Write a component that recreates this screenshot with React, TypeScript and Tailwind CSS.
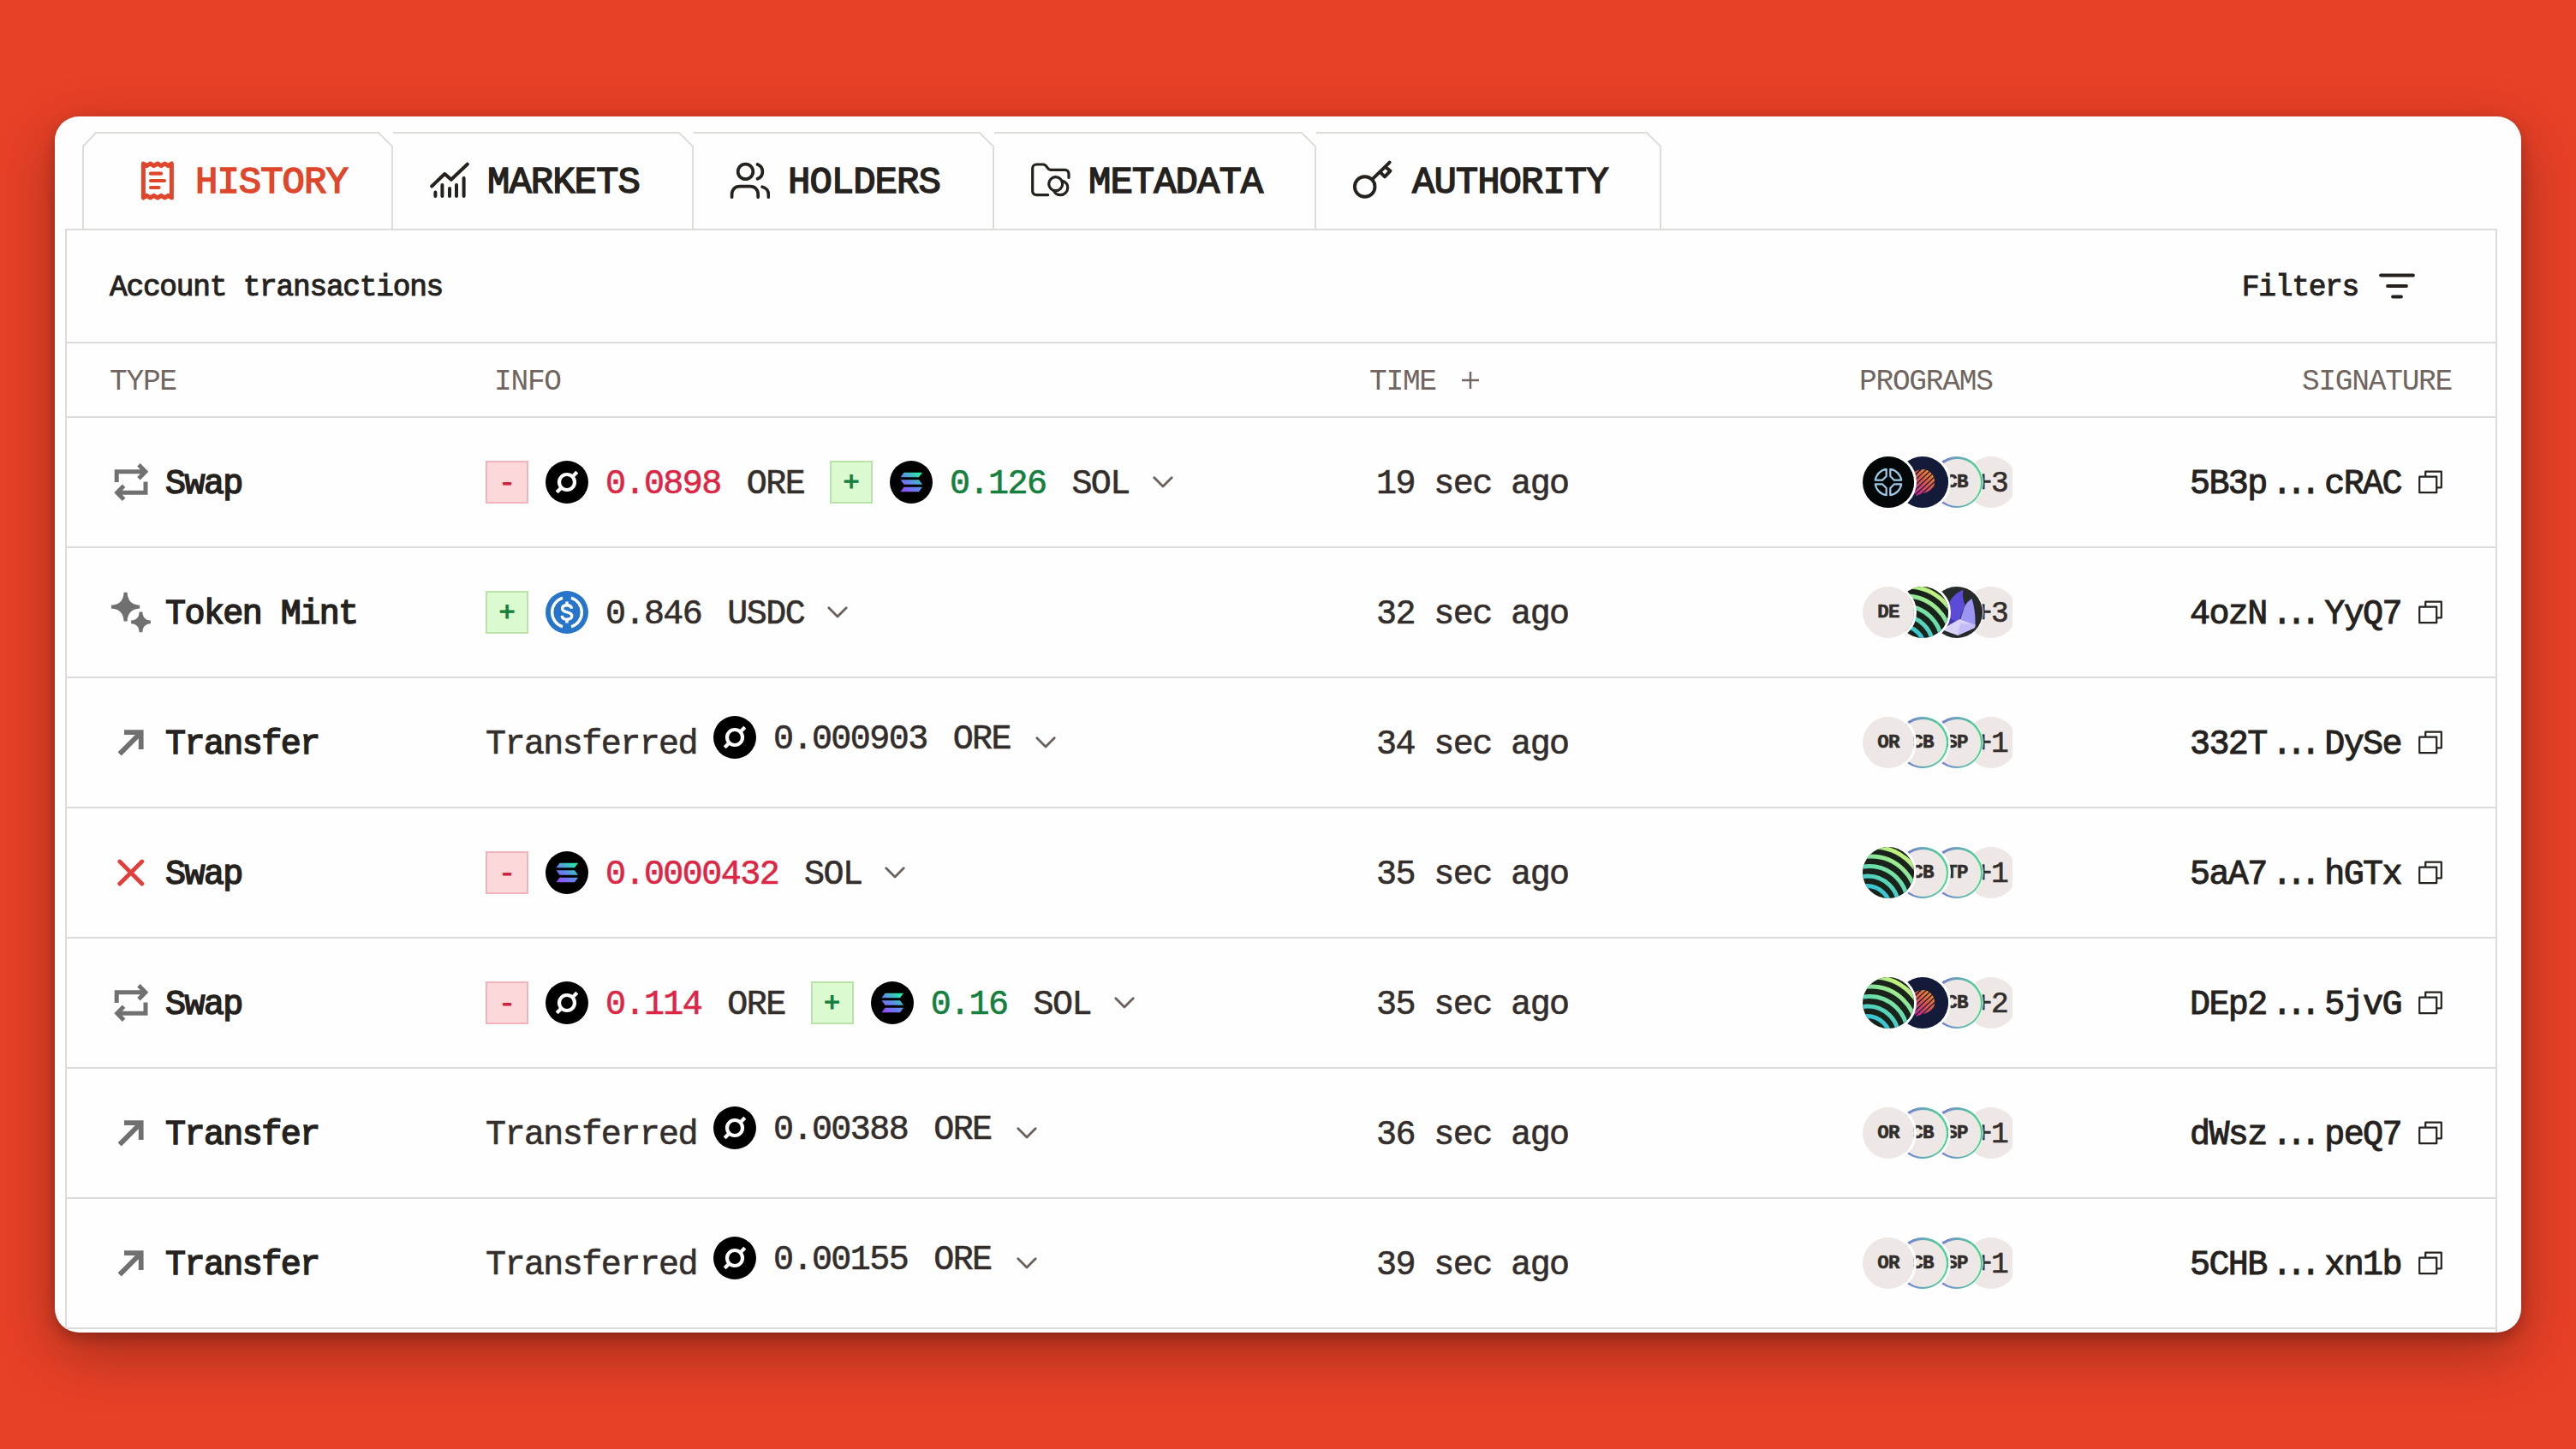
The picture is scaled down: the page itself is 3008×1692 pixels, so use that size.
import { useState } from 'react';
import type { ReactNode } from 'react';

const MONO = "font-['Liberation_Mono','DejaVu_Sans_Mono',monospace]";
const BODY = 'text-[40px] leading-[48px] tracking-[-1.55px] pt-1.5';
const LABEL = 'text-[34.5px] leading-[40px] tracking-[-1.25px] pt-1';
const COLS = 'grid grid-cols-[438px_1040px_568px_300px_1fr]';

type Token = 'ORE' | 'SOL' | 'USDC';
type Leg = { sign?: '+' | '-'; token: Token; amount: string };
type Row = {
    type: 'Swap' | 'Token Mint' | 'Transfer';
    failed?: boolean;
    legs: Leg[];
    time: string;
    programs: string[];
    more: number;
    sig: [string, string];
};

const ROWS: Row[] = [
    { type: 'Swap', legs: [{ sign: '-', token: 'ORE', amount: '0.0898' }, { sign: '+', token: 'SOL', amount: '0.126' }], time: '19 sec ago', programs: ['grid', 'stripes', 'CB'], more: 3, sig: ['5B3p', 'cRAC'] },
    { type: 'Token Mint', legs: [{ sign: '+', token: 'USDC', amount: '0.846' }], time: '32 sec ago', programs: ['DE', 'jup', 'flame'], more: 3, sig: ['4ozN', 'YyQ7'] },
    { type: 'Transfer', legs: [{ token: 'ORE', amount: '0.000903' }], time: '34 sec ago', programs: ['OR', 'CB', 'SP'], more: 1, sig: ['332T', 'DySe'] },
    { type: 'Swap', failed: true, legs: [{ sign: '-', token: 'SOL', amount: '0.0000432' }], time: '35 sec ago', programs: ['jup', 'CB', 'TP'], more: 1, sig: ['5aA7', 'hGTx'] },
    { type: 'Swap', legs: [{ sign: '-', token: 'ORE', amount: '0.114' }, { sign: '+', token: 'SOL', amount: '0.16' }], time: '35 sec ago', programs: ['jup', 'stripes', 'CB'], more: 2, sig: ['DEp2', '5jvG'] },
    { type: 'Transfer', legs: [{ token: 'ORE', amount: '0.00388' }], time: '36 sec ago', programs: ['OR', 'CB', 'SP'], more: 1, sig: ['dWsz', 'peQ7'] },
    { type: 'Transfer', legs: [{ token: 'ORE', amount: '0.00155' }], time: '39 sec ago', programs: ['OR', 'CB', 'SP'], more: 1, sig: ['5CHB', 'xn1b'] },
];

function Icon({ children, width = 4, className = '' }: { children: ReactNode; width?: number; className?: string }) {
    return (
        <svg viewBox="0 0 48 48" className={`w-12 h-12 shrink-0 ${className}`} fill="none" stroke="currentColor" strokeWidth={width} strokeLinecap="round" strokeLinejoin="round">
            {children}
        </svg>
    );
}

const HistoryIcon = () => (
    <Icon width={5}>
        <path d="M7.4 4l4 2.6 4-2.6 4.2 2.6L24 4l4.3 2.6L32.4 4l4 2.6 4-2.6v40l-4-2.6-4 2.6-4.1-2.6L24 44l-4.4-2.6-4.2 2.6-4-2.6-4 2.6z" />
        <path d="M16 15.7h12M16 24h16M16 32h9.5" strokeWidth={4.2} />
    </Icon>
);

const MarketsIcon = () => (
    <Icon width={4}>
        <path d="M3.2 30.5L18.3 16l7.5 6.8L44.8 4.7" />
        <path d="M7.4 37.5v4.5M15.4 29v13M24 33v9M32 29v13M40.6 21v21" />
    </Icon>
);

const HoldersIcon = () => (
    <Icon width={3.7}>
        <circle cx="19.5" cy="13.4" r="8.8" />
        <path d="M33.6 5a9 9 0 0 1 0 16.8M3.6 43.2V40c0-5.4 3.8-9.4 9-9.4h12.6c5.2 0 9 4 9 9.4v3.2M39.2 31.2c4.2 1 7.2 4.4 7.2 8.8v3.2" />
    </Icon>
);

const MetadataIcon = () => (
    <Icon width={3.2}>
        <path d="M20.7 40.7H7.2a4.5 4.5 0 0 1-4.5-4.5V9.5A4.5 4.5 0 0 1 7.2 5H15c2.3 0 3.3 1.2 4.4 3s2 3.3 4.3 3.3h16.8a4.5 4.5 0 0 1 4.5 4.5v4.6" />
        <circle cx="29.7" cy="27.7" r="8" />
        <path d="M38.4 24.4c3.4 1.6 5.4 4.2 5.4 7.6a8.5 8.5 0 0 1-8.5 8.6c-3.6 0-6.2-1.6-7.6-4.8" />
    </Icon>
);

const KeyIcon = () => (
    <Icon width={3.9}>
        <circle cx="15.7" cy="31" r="11.8" />
        <path d="M24.4 22.3L44.6 2.6M40 8.2l5.4 4.4-6.4 6.8-5-5" />
    </Icon>
);

const TABS = [
    { label: 'HISTORY', icon: <HistoryIcon />, width: 361, pad: 'pl-[63px]', gap: 'gap-[20px]' },
    { label: 'MARKETS', icon: <MarketsIcon />, width: 351, pad: 'pl-[43px]', gap: 'gap-[20px]' },
    { label: 'HOLDERS', icon: <HoldersIcon />, width: 351, pad: 'pl-[42px]', gap: 'gap-[21px]' },
    { label: 'METADATA', icon: <MetadataIcon />, width: 376, pad: 'pl-[43px]', gap: 'gap-[20px]' },
    { label: 'AUTHORITY', icon: <KeyIcon />, width: 403, pad: 'pl-[42px]', gap: 'gap-[23px]' },
];

function TypeIcon({ type, failed }: { type: Row['type']; failed?: boolean }) {
    if (failed) {
        return (
            <Icon width={4.8} className="text-[#e23f3a]">
                <path d="M10.8 11l26 26M36.8 11l-26 26" />
            </Icon>
        );
    }
    if (type === 'Swap') {
        return (
            <svg viewBox="0 0 48 48" className="w-12 h-12 shrink-0 text-[#707070]" fill="none" stroke="currentColor" strokeWidth="5">
                <path d="M7.2 24V11.8H40M33 3.8l7.8 8-7.8 8" />
                <path d="M41 23.5v12.7H8M15.6 28.2l-7.8 8 7.8 8" />
            </svg>
        );
    }
    if (type === 'Token Mint') {
        return (
            <svg viewBox="0 0 48 48" className="w-12 h-12 shrink-0 text-[#707070]" fill="currentColor">
                <path d="M15.6.8h4c.5 9.6 5 14.4 14.6 15v3.8c-9.6.6-14.1 5.4-14.6 15h-4c-.5-9.6-5-14.4-14.6-15v-3.8c9.6-.6 14.1-5.4 14.6-15z" />
                <path d="M33.7 23.6h3.6c.5 6.6 3.2 9.5 9.6 10v3.6c-6.4.5-9.1 3.4-9.6 10h-3.6c-.5-6.6-3.2-9.5-9.6-10v-3.6c6.4-.5 9.1-3.4 9.6-10z" />
            </svg>
        );
    }
    return (
        <svg viewBox="0 0 48 48" className="w-12 h-12 shrink-0 text-[#707070]" fill="none" stroke="currentColor" strokeWidth="5.8">
            <path d="M16 12.2h19.7V32M35.7 12.2l-25 25.2" />
        </svg>
    );
}

function TokenLogo({ token }: { token: Token }) {
    if (token === 'ORE') {
        return (
            <svg viewBox="0 0 50 50" className="w-[50px] h-[50px] shrink-0">
                <circle cx="25" cy="25" r="25" fill="#000" />
                <g fill="none" stroke="#fff" strokeWidth="4.2">
                    <circle cx="25" cy="25" r="9" />
                    <path d="M31 19l5.8-5.8M19 31l-5.8 5.8" />
                </g>
            </svg>
        );
    }
    if (token === 'SOL') {
        return (
            <svg viewBox="0 0 50 50" className="w-[50px] h-[50px] shrink-0">
                <defs>
                    <linearGradient id="sol" gradientUnits="userSpaceOnUse" x1="15" y1="38" x2="35" y2="13">
                        <stop offset="0" stopColor="#9945ff" />
                        <stop offset="0.5" stopColor="#5f8be8" />
                        <stop offset="1" stopColor="#19fb9b" />
                    </linearGradient>
                </defs>
                <circle cx="25" cy="25" r="25" fill="#000" />
                <path d="M16.5 13.8H38l-4 5.4H12.5zM12.5 22.3H34l4 5.4H16.5zM16.5 30.8H38l-4 5.4H12.5z" fill="url(#sol)" />
            </svg>
        );
    }
    return (
        <svg viewBox="0 0 50 50" className="w-[50px] h-[50px] shrink-0">
            <circle cx="25" cy="25" r="25" fill="#2775ca" />
            <g fill="none" stroke="#fff" strokeWidth="3.4">
                <path d="M20 8.2a17.6 17.6 0 0 0 0 33.6M30 8.2a17.6 17.6 0 0 1 0 33.6" />
                <path d="M30.6 20.8c-.5-2.7-2.6-4-5.6-4-3.3 0-5.4 1.6-5.4 4 0 5.4 11.2 2.6 11.2 8.3 0 2.6-2.3 4.2-5.7 4.2-3.4 0-5.7-1.5-6-4.4M25 12.5V17M25 33v4.5" />
            </g>
        </svg>
    );
}

function SignBox({ sign }: { sign: '+' | '-' }) {
    const plus = sign === '+';
    return (
        <div className={`w-[50px] h-[50px] shrink-0 border-2 flex items-center justify-center ${plus ? 'bg-[#dcfad0] border-[#b9e3a8] text-[#15803d]' : 'bg-[#fdd8db] border-[#efb5bb] text-[#cf2340]'}`}>
            <span className="pt-1 text-[32px] leading-[40px] [-webkit-text-stroke:1.2px]">{sign}</span>
        </div>
    );
}

const Chevron = () => (
    <svg viewBox="0 0 24 14" className="-ml-[3px] w-6 h-[14px] shrink-0 text-[#6b615b]" fill="none" stroke="currentColor" strokeWidth="2.8" strokeLinecap="round" strokeLinejoin="round">
        <path d="M1.8 1.8L12 12 22.2 1.8" />
    </svg>
);

function LegView({ leg }: { leg: Leg }) {
    const color = leg.sign === '-' ? 'text-[#dc2645]' : leg.sign === '+' && leg.token !== 'USDC' ? 'text-[#15803d]' : '';
    return (
        <div className="flex items-center gap-5">
            {leg.sign && <SignBox sign={leg.sign} />}
            <TokenLogo token={leg.token} />
            <div className={`flex gap-[30px] ${BODY}`}>
                <span className={color}>{leg.amount}</span>
                <span>{leg.token}</span>
            </div>
        </div>
    );
}

function Info({ row }: { row: Row }) {
    if (row.type === 'Transfer') {
        return (
            <div className="flex items-center">
                <span className={BODY}>Transferred</span>
                <div className="ml-[19px] mr-8 pb-3">
                    <LegView leg={row.legs[0]} />
                </div>
                <Chevron />
            </div>
        );
    }
    return (
        <div className="flex items-center gap-[30px]">
            {row.legs.map((leg, i) => (
                <LegView key={i} leg={leg} />
            ))}
            <Chevron />
        </div>
    );
}

function ProgramArt({ name }: { name: string }) {
    if (name === 'grid') {
        return (
            <svg viewBox="0 0 60 60" className="w-full h-full">
                <circle cx="30" cy="30" r="30" fill="#030606" />
                <g fill="none" stroke="#9cc9e6" strokeWidth="2.2" strokeLinejoin="round">
                    {[0, 90, 180, 270].map(r => (
                        <path key={r} transform={`rotate(${r} 30 30)`} d="M14.8 27.7A15.4 15.4 0 0 1 27.7 14.8V23L23 27.7z" />
                    ))}
                </g>
            </svg>
        );
    }
    if (name === 'stripes') {
        return (
            <svg viewBox="0 0 60 60" className="w-full h-full">
                <defs>
                    <linearGradient id="blob" gradientUnits="userSpaceOnUse" x1="20" y1="42" x2="42" y2="16">
                        <stop offset="0" stopColor="#c0268c" />
                        <stop offset="0.5" stopColor="#e0564a" />
                        <stop offset="1" stopColor="#f0921e" />
                    </linearGradient>
                    <clipPath id="blobClip">
                        <path d="M30 15a14.5 14.5 0 0 1 14.2 14.2c0 6-4 10.6-10 12.8L22 46l-6-17A14 14 0 0 1 30 15z" />
                    </clipPath>
                </defs>
                <circle cx="30" cy="30" r="30" fill="#131b38" />
                <g clipPath="url(#blobClip)" stroke="url(#blob)" strokeWidth="3">
                    <path d="M4 35l28-27M6 39l32-30M10 41l32-30M13 44l32-30M15 48l32-30M18 51l32-30M22 53l32-30" />
                </g>
            </svg>
        );
    }
    if (name === 'jup') {
        return (
            <svg viewBox="0 0 60 60" className="w-full h-full">
                <defs>
                    <linearGradient id="jup" gradientUnits="userSpaceOnUse" x1="16" y1="58" x2="46" y2="6">
                        <stop offset="0" stopColor="#27bfdd" />
                        <stop offset="0.5" stopColor="#6fe0a8" />
                        <stop offset="1" stopColor="#c8f279" />
                    </linearGradient>
                    <clipPath id="jupClip">
                        <circle cx="30" cy="30" r="30" />
                    </clipPath>
                </defs>
                <circle cx="30" cy="30" r="30" fill="#1a221c" />
                <g clipPath="url(#jupClip)" fill="none" stroke="url(#jup)" strokeWidth="5">
                    <circle cx="12" cy="61" r="61" />
                    <circle cx="10" cy="64" r="53" />
                    <circle cx="8" cy="67" r="44.5" />
                    <circle cx="6" cy="70" r="36" />
                    <circle cx="5" cy="73" r="27.5" />
                    <circle cx="5" cy="76" r="19.5" />
                </g>
            </svg>
        );
    }
    return (
        <svg viewBox="0 0 60 60" className="w-full h-full">
            <circle cx="30" cy="30" r="30" fill="#272a2a" />
            <path d="M37.5 3.5c-8 3.5-14 9-17 16.5l-6 17 17 6 8-22c-2.5-6-3-11.5-2-17.5z" fill="#5b4bd6" />
            <path d="M14.5 34l18 8-10 5z" fill="#4033b5" />
            <path d="M47.5 14c-6 4-9 9-10 14l-5 15 19 2c.5-10-1-22-4-31z" fill="#9d95f2" />
            <path d="M12 50l21-12 18.5 7-.500 3L31 57z" fill="#d9d3f8" />
            <path d="M31 57l3-14 17.5 1-.5 4z" fill="#c4bcf6" />
        </svg>
    );
}

const ART = ['grid', 'stripes', 'jup', 'flame'];
const STACK = ['z-30 ring-[3px]', 'z-20 ring-[3px]', 'z-10 ring-1'];

function Programs({ row }: { row: Row }) {
    return (
        <div className="flex w-[175px] h-[60px] overflow-hidden">
            {row.programs.map((name, i) => {
                const ringed = !ART.includes(name) && i > 0;
                return (
                    <div key={i} className={`relative w-[60px] h-[60px] shrink-0 rounded-full ring-white -mr-5 ${STACK[i]}`}>
                        {ART.includes(name) ? (
                            <ProgramArt name={name} />
                        ) : (
                            <div className={`w-full h-full rounded-full ${ringed ? 'p-[2.5px] bg-linear-to-r from-[#7a5fd8] to-[#35df86]' : ''}`}>
                                <div className="w-full h-full rounded-full bg-[#ede8e6] flex items-center justify-center pt-0.5 text-[22.5px] font-bold tracking-[-0.8px] text-[#332e2b]">
                                    {name}
                                </div>
                            </div>
                        )}
                    </div>
                );
            })}
            <div className="w-[60px] h-[60px] shrink-0 rounded-full bg-[#ede8e6] flex items-center justify-center">
                <span className={LABEL}>+{row.more}</span>
            </div>
        </div>
    );
}

const CopyIcon = () => (
    <svg viewBox="0 0 28 28" className="w-7 h-7 shrink-0" fill="none" stroke="currentColor" strokeWidth="2.2" strokeLinejoin="round">
        <path d="M1.2 7.6h20v18.6h-20zM8.2 7.6V1.7h18.6v18.6h-5.6" />
    </svg>
);

export default function App() {
    const [active, setActive] = useState('HISTORY');

    return (
        <div className={`w-[3008px] h-[1692px] overflow-hidden bg-[#e84127] pt-[136px] px-16 ${MONO}`}>
            <div className="h-[1420px] w-[2880px] rounded-[28px] overflow-hidden bg-[#fefefe] shadow-[0_24px_70px_rgba(0,0,0,0.3),0_6px_16px_rgba(0,0,0,0.22)] pl-3 pr-7">
                <div className="flex pl-[21px] pt-[18px] h-[131px]">
                    {TABS.map((tab, i) => (
                        <button
                            key={tab.label}
                            onClick={() => setActive(tab.label)}
                            style={{ width: tab.width }}
                            className={`relative h-[113px] shrink-0 flex items-center text-left ${tab.pad} ${tab.gap} ${active === tab.label ? 'text-[#de472b]' : 'text-[#25221e]'}`}
                        >
                            <svg className="absolute inset-0 w-full h-full overflow-visible" fill="none" stroke="#dfddd8" strokeWidth="2">
                                <path
                                    d={
                                        i === 0
                                            ? `M0 113V17L15 1H${tab.width - 16}L${tab.width} 17V113`
                                            : `M1 1H${tab.width - 16}L${tab.width} 17V113`
                                    }
                                />
                            </svg>
                            {tab.icon}
                            <span className="pt-[5px] text-[44px] leading-[56px] tracking-[-1px] [-webkit-text-stroke:1.5px]">{tab.label}</span>
                        </button>
                    ))}
                </div>

                <div className="border-2 border-[#dedcda] border-b-0 h-[1300px]">
                    <div className="h-[132px] border-b-2 border-[#dedcda] flex items-center justify-between pl-[50px] pr-[92px] text-[#25221e]">
                        <span className={`${LABEL} [-webkit-text-stroke:1px]`}>Account transactions</span>
                        <button className="flex items-center gap-6">
                            <span className={`${LABEL} [-webkit-text-stroke:1px]`}>Filters</span>
                            <svg viewBox="0 0 44 32" className="w-11 h-8" fill="none" stroke="currentColor" strokeWidth="3.8" strokeLinecap="round">
                                <path d="M2 3.5h38M10 16h22M16 28.5h10" />
                            </svg>
                        </button>
                    </div>

                    <div className={`${COLS} h-[87px] border-b-2 border-[#dedcda] items-center pl-[50px] pr-[51px] text-[#70655f]`}>
                        <span className={LABEL}>TYPE</span>
                        <span className={`${LABEL} pl-[11px]`}>INFO</span>
                        <div className="flex items-center gap-[30px] -ml-[7px]">
                            <span className={LABEL}>TIME</span>
                            <svg viewBox="0 0 20 20" className="w-5 h-5" stroke="currentColor" strokeWidth="2.4">
                                <path d="M10 0v20M0 10h20" />
                            </svg>
                        </div>
                        <span className={`${LABEL} -ml-[3px]`}>PROGRAMS</span>
                        <span className={`${LABEL} text-right`}>SIGNATURE</span>
                    </div>

                    {ROWS.map((row, i) => (
                        <div key={i} className={`${COLS} h-[152px] border-b-2 border-[#dedcda] items-center pl-[51px] pr-[62px] text-[#332e2b] [-webkit-text-stroke:0.6px]`}>
                            <div className="flex items-center gap-4">
                                <TypeIcon type={row.type} failed={row.failed} />
                                <span className={`${BODY} text-[#25221e] [-webkit-text-stroke:1.5px]`}>{row.type}</span>
                            </div>
                            <Info row={row} />
                            <span className={BODY}>{row.time}</span>
                            <Programs row={row} />
                            <div className="flex items-center justify-end text-[#25221e] [-webkit-text-stroke:1px]">
                                <span className={BODY}>{row.sig[0]}</span>
                                <span className="text-[40px] leading-[48px] pt-1.5 tracking-[-7.2px] pl-1.5 pr-[11px]">...</span>
                                <span className={BODY}>{row.sig[1]}</span>
                                <div className="pl-5">
                                    <CopyIcon />
                                </div>
                            </div>
                        </div>
                    ))}
                </div>
            </div>
        </div>
    );
}
